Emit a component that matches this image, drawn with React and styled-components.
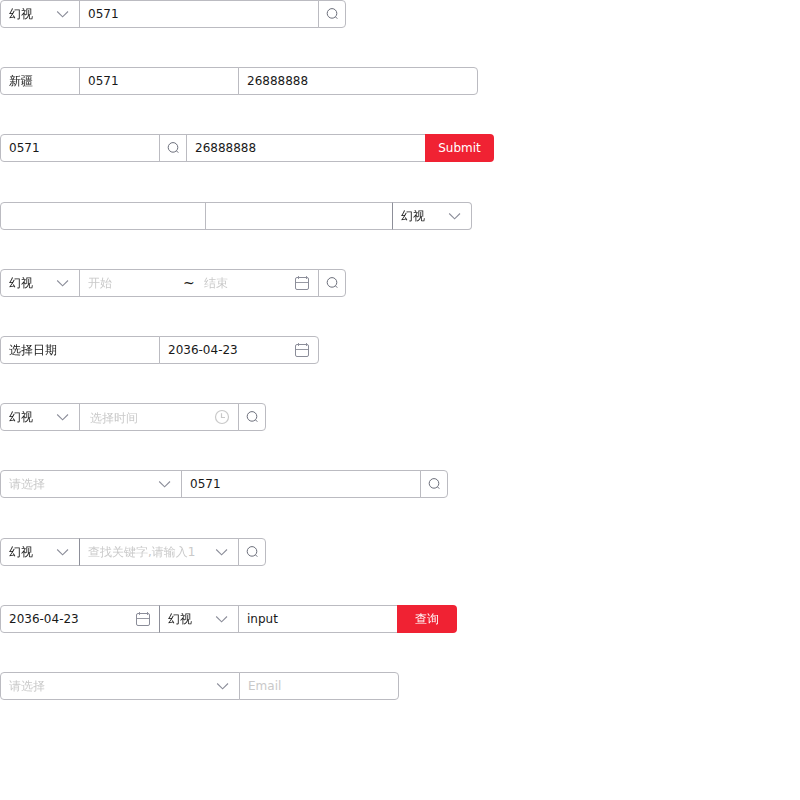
import React from 'react';
import styled, { createGlobalStyle, css } from 'styled-components';

const GlobalStyle = createGlobalStyle`
  *, *::before, *::after { box-sizing: border-box; }
  body {
    margin: 0;
    background: #fff;
    color: #191919;
    font: 12px/1.5 "DejaVu Sans", "WenQuanYi Zen Hei", "Noto Sans CJK SC", sans-serif;
  }
`;

const Page = styled.main`
  display: flex;
  flex-direction: column;
  gap: 39.2px;
`;

const Group = styled.div`
  display: flex;
  height: 28px;

  & > * + * { margin-left: -1px; }
  & > :first-child { border-top-left-radius: 4px; border-bottom-left-radius: 4px; }
  & > :last-child { border-top-right-radius: 4px; border-bottom-right-radius: 4px; }
`;

const frame = css`
  flex: none;
  height: 28px;
  border: 1px solid #bbbbc1;
  background: #fff;
`;

const Field = styled.div`
  ${frame}
  display: flex;
  align-items: center;
  width: ${(p) => p.$width}px;
  padding: 0 8px;
  white-space: nowrap;
  ${(p) => p.$strong && css`border-left-color: #8d8f99;`}
`;

const Value = styled.span`
  flex: 1;
  min-width: 0;
  line-height: 18px;
`;

const Placeholder = styled(Value)`
  color: #c9c9c9;
  ${(p) => p.$nudged && css`padding: 2px 0 0 2px;`}
`;

const Range = styled.div`
  flex: 1;
  display: grid;
  grid-template-columns: 90px 26px 1fr;
  align-items: center;
`;

const Tilde = styled.span`
  padding-left: 5px;
  font-size: 14px;
  line-height: 18px;
`;

const IconButton = styled.button`
  ${frame}
  display: grid;
  place-items: center;
  width: 28px;
  padding: 0;
`;

const PrimaryButton = styled.button`
  flex: none;
  width: ${(p) => p.$width}px;
  height: 28px;
  padding: 0;
  border: 0;
  background: #f02233;
  color: #fff;
  font: inherit;
`;

const Glyph = styled.svg`
  display: block;
  flex: none;
  fill: none;
  stroke: ${(p) => p.$color || '#8b8d99'};
  margin-right: ${(p) => p.$right || 0}px;
`;

const Chevron = () => (
  <Glyph width="14" height="14" viewBox="0 0 14 14" strokeWidth="1.1" $right={1}>
    <path d="M1.2 4.5 6.6 9.8l5.4-5.3" />
  </Glyph>
);

const Search = () => (
  <Glyph width="14" height="14" viewBox="0 0 14 14" $color="#6c6f7b">
    <circle cx="7" cy="6.4" r="4.8" />
    <path d="M10.5 9.9l1.8 1.8" />
  </Glyph>
);

const Calendar = () => (
  <Glyph width="16" height="16" viewBox="0 0 16 16">
    <rect x="1.5" y="2.5" width="13" height="12" rx="1.5" />
    <path d="M1.5 7.5h13M4.5 1v3M12.5 1v3" strokeWidth="0.9" />
  </Glyph>
);

const Clock = () => (
  <Glyph width="16" height="16" viewBox="0 0 16 16" strokeWidth="1.2" $color="#c9c9c9">
    <circle cx="8" cy="8" r="6.5" />
    <path d="M7.5 4.2v4.3h3.5" />
  </Glyph>
);

const Input = ({ width, value, placeholder }) => (
  <Field $width={width}>
    {placeholder ? <Placeholder>{placeholder}</Placeholder> : <Value>{value}</Value>}
  </Field>
);

const Select = ({ width = 80, value, placeholder, strong }) => (
  <Field $width={width} $strong={strong}>
    {placeholder ? <Placeholder>{placeholder}</Placeholder> : <Value>{value}</Value>}
    <Chevron />
  </Field>
);

const DateField = ({ value }) => (
  <Field $width={160}>
    <Value>{value}</Value>
    <Calendar />
  </Field>
);

const SearchButton = () => <IconButton aria-label="Search"><Search /></IconButton>;

export default function App() {
  return (
    <>
      <GlobalStyle />
      <Page>
        <Group>
          <Select value="幻视" />
          <Input width={240} value="0571" />
          <SearchButton />
        </Group>
        <Group>
          <Input width={80} value="新疆" />
          <Input width={160} value="0571" />
          <Input width={240} value="26888888" />
        </Group>
        <Group>
          <Input width={160} value="0571" />
          <SearchButton />
          <Input width={240} value="26888888" />
          <PrimaryButton $width={69}>Submit</PrimaryButton>
        </Group>
        <Group>
          <Input width={206} />
          <Input width={188} />
          <Select value="幻视" strong />
        </Group>
        <Group>
          <Select value="幻视" />
          <Field $width={240}>
            <Range>
              <Placeholder>开始</Placeholder>
              <Tilde>~</Tilde>
              <Placeholder>结束</Placeholder>
            </Range>
            <Calendar />
          </Field>
          <SearchButton />
        </Group>
        <Group>
          <Input width={160} value="选择日期" />
          <DateField value="2036-04-23" />
        </Group>
        <Group>
          <Select value="幻视" />
          <Field $width={160}>
            <Placeholder $nudged>选择时间</Placeholder>
            <Clock />
          </Field>
          <SearchButton />
        </Group>
        <Group>
          <Select width={182} placeholder="请选择" />
          <Input width={240} value="0571" />
          <SearchButton />
        </Group>
        <Group>
          <Select value="幻视" />
          <Select width={160} placeholder="查找关键字,请输入1" strong />
          <SearchButton />
        </Group>
        <Group>
          <DateField value="2036-04-23" />
          <Select value="幻视" strong />
          <Input width={160} value="input" />
          <PrimaryButton $width={60}>查询</PrimaryButton>
        </Group>
        <Group>
          <Select width={240} placeholder="请选择" />
          <Input width={160} placeholder="Email" />
        </Group>
      </Page>
    </>
  );
}
